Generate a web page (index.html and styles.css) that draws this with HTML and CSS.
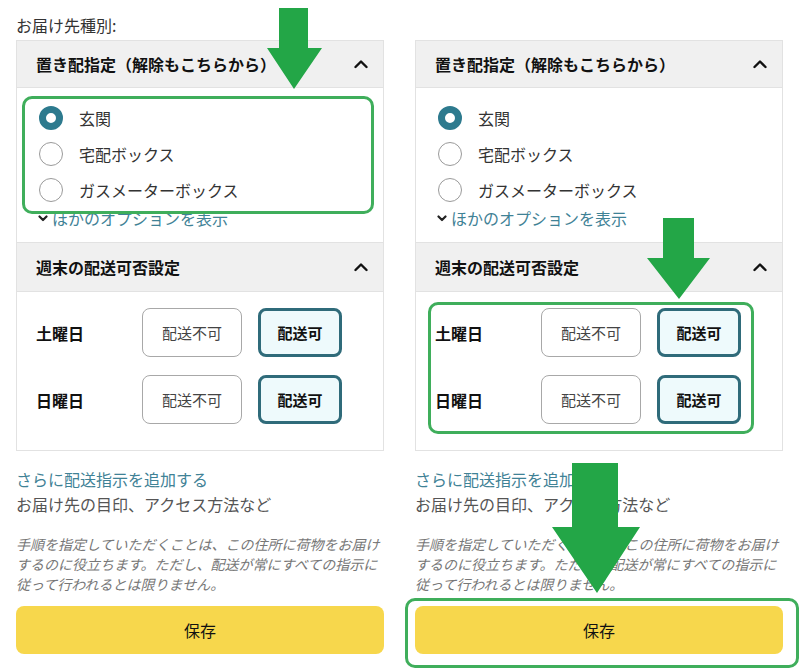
FILE: index.html
```html
<!DOCTYPE html>
<html lang="ja">
<head>
<meta charset="utf-8">
<title>置き配指定</title>
<link rel="stylesheet" href="styles.css">
</head>
<body>
<div class="page">
  <div class="col">
    <div class="field-label">お届け先種別:</div>
    <div class="panel">
      <div class="sec-head">
        <span>置き配指定（解除もこちらから）</span>
        <svg class="chev-up" width="14" height="10" viewBox="0 0 14 10"><polyline points="1.5,8 7,2.5 12.5,8" fill="none" stroke="#111" stroke-width="2.4" stroke-linecap="round" stroke-linejoin="round"/></svg>
      </div>
      <div class="radio-list">
        <div class="radio-row"><span class="radio radio-on"></span><span>玄関</span></div>
        <div class="radio-row"><span class="radio"></span><span>宅配ボックス</span></div>
        <div class="radio-row"><span class="radio"></span><span>ガスメーターボックス</span></div>
      </div>
      <div class="more-link">
        <svg class="chev-down" width="10" height="7" viewBox="0 0 10 7"><polyline points="1.5,1.5 5,5 8.5,1.5" fill="none" stroke="#222" stroke-width="2.2" stroke-linecap="round" stroke-linejoin="round"/></svg>
        <span>ほかのオプションを表示</span>
      </div>
      <div class="sec-head sec-head-top">
        <span>週末の配送可否設定</span>
        <svg class="chev-up" width="14" height="10" viewBox="0 0 14 10"><polyline points="1.5,8 7,2.5 12.5,8" fill="none" stroke="#111" stroke-width="2.4" stroke-linecap="round" stroke-linejoin="round"/></svg>
      </div>
      <div class="day-rows">
        <div class="day-row"><span class="day-label">土曜日</span><span class="opt opt-no">配送不可</span><span class="opt opt-on">配送可</span></div>
        <div class="day-row"><span class="day-label">日曜日</span><span class="opt opt-no">配送不可</span><span class="opt opt-on">配送可</span></div>
      </div>
    </div>
    <div class="add-link">さらに配送指示を追加する</div>
    <div class="sub">お届け先の目印、アクセス方法など</div>
    <p class="note">手順を指定していただくことは、この住所に荷物をお届けするのに役立ちます。ただし、配送が常にすべての指示に従って行われるとは限りません。</p>
    <div class="save">保存</div>
  </div>

  <div class="col">
    <div class="field-label"></div>
    <div class="panel">
      <div class="sec-head">
        <span>置き配指定（解除もこちらから）</span>
        <svg class="chev-up" width="14" height="10" viewBox="0 0 14 10"><polyline points="1.5,8 7,2.5 12.5,8" fill="none" stroke="#111" stroke-width="2.4" stroke-linecap="round" stroke-linejoin="round"/></svg>
      </div>
      <div class="radio-list">
        <div class="radio-row"><span class="radio radio-on"></span><span>玄関</span></div>
        <div class="radio-row"><span class="radio"></span><span>宅配ボックス</span></div>
        <div class="radio-row"><span class="radio"></span><span>ガスメーターボックス</span></div>
      </div>
      <div class="more-link">
        <svg class="chev-down" width="10" height="7" viewBox="0 0 10 7"><polyline points="1.5,1.5 5,5 8.5,1.5" fill="none" stroke="#222" stroke-width="2.2" stroke-linecap="round" stroke-linejoin="round"/></svg>
        <span>ほかのオプションを表示</span>
      </div>
      <div class="sec-head sec-head-top">
        <span>週末の配送可否設定</span>
        <svg class="chev-up" width="14" height="10" viewBox="0 0 14 10"><polyline points="1.5,8 7,2.5 12.5,8" fill="none" stroke="#111" stroke-width="2.4" stroke-linecap="round" stroke-linejoin="round"/></svg>
      </div>
      <div class="day-rows">
        <div class="day-row"><span class="day-label">土曜日</span><span class="opt opt-no">配送不可</span><span class="opt opt-on">配送可</span></div>
        <div class="day-row"><span class="day-label">日曜日</span><span class="opt opt-no">配送不可</span><span class="opt opt-on">配送可</span></div>
      </div>
    </div>
    <div class="add-link">さらに配送指示を追加する</div>
    <div class="sub">お届け先の目印、アクセス方法など</div>
    <p class="note">手順を指定していただくことは、この住所に荷物をお届けするのに役立ちます。ただし、配送が常にすべての指示に従って行われるとは限りません。</p>
    <div class="save">保存</div>
  </div>

  <div class="hl hl-radios"></div>
  <div class="hl hl-days"></div>
  <div class="hl hl-save"></div>
  <svg class="arrows" width="800" height="668" viewBox="0 0 800 668">
    <polygon points="279,8 308,8 308,48 322,48 294,89 267,48 279,48" fill="#23a647"/>
    <polygon points="663,218 694,218 694,258 710,258 679,299 647,258 663,258" fill="#23a647"/>
    <polygon points="572,463 618,463 618,527 640,527 597,593 552,527 572,527" fill="#23a647"/>
  </svg>
</div>
</body>
</html>
```

FILE: styles.css
```css
* { box-sizing: border-box; }
html, body { margin: 0; padding: 0; background: #fff; }
body {
  font-family: "Noto Sans CJK JP", "Noto Sans", sans-serif;
  color: #111;
  font-size: 16px;
}
.page {
  position: relative;
  width: 800px;
  height: 668px;
  overflow: hidden;
  display: flex;
  gap: 31px;
  padding: 15px 16px 0 16px;
}
.col {
  width: 368px;
  flex: none;
}
.field-label {
  height: 20px;
  line-height: 20px;
  font-size: 16px;
  color: #333;
  margin-bottom: 5px;
}
.panel {
  border: 1px solid #e2e2e2;
}
.sec-head {
  height: 47px;
  background: #f0f0f0;
  border-bottom: 1px solid #e2e2e2;
  display: flex;
  align-items: center;
  justify-content: space-between;
  padding: 0 15px 0 19px;
  font-weight: 700;
  font-size: 16px;
  color: #111;
}
.sec-head-top {
  height: 50px;
  border-top: 1px solid #e2e2e2;
}
.chev-up { display: block; }
.radio-list {
  padding-top: 12px;
}
.radio-row {
  height: 36px;
  display: flex;
  align-items: center;
  padding-left: 22px;
  gap: 16px;
  font-size: 16px;
  color: #333;
}
.radio {
  width: 24px;
  height: 24px;
  border-radius: 50%;
  border: 1.5px solid #9a9a9a;
  background: #fff;
  flex: none;
}
.radio-on {
  border: 7px solid #2d7a8e;
}
.more-link {
  height: 20px;
  line-height: 20px;
  display: flex;
  align-items: center;
  gap: 4px;
  padding-left: 21px;
  color: #3f8296;
  font-size: 16px;
  margin-bottom: 14px;
}
.chev-down { display: block; }
.day-rows {
  padding: 16px 0 26px 19px;
  display: flex;
  flex-direction: column;
  gap: 18px;
}
.day-row {
  display: flex;
  align-items: center;
  height: 49px;
}
.day-label {
  width: 106px;
  font-weight: 700;
  font-size: 16px;
  color: #111;
}
.opt {
  height: 49px;
  display: flex;
  align-items: center;
  justify-content: center;
  border-radius: 8px;
  font-size: 15px;
}
.opt-no {
  width: 100px;
  border: 1px solid #a8a8a8;
  color: #444;
  margin-right: 16px;
}
.opt-on {
  width: 84px;
  border: 3px solid #2f6b7a;
  background: #eefafc;
  font-weight: 700;
  color: #111;
}
.add-link {
  margin-top: 17px;
  line-height: 22px;
  color: #3f8296;
  font-size: 16px;
}
.sub {
  margin-top: 3px;
  line-height: 22px;
  color: #555;
  font-size: 16px;
}
.note {
  margin: 19px 0 0 0;
  font-size: 14px;
  line-height: 20px;
  color: #777;
  font-style: italic;
}
.save {
  margin-top: 12px;
  height: 48px;
  border-radius: 8px;
  background: #f7d74c;
  display: flex;
  align-items: center;
  justify-content: center;
  font-size: 16px;
  color: #111;
}
.hl {
  position: absolute;
  border: 3px solid #3fae5b;
  border-radius: 10px;
  pointer-events: none;
}
.hl-radios { left: 22px; top: 96px; width: 352px; height: 118px; }
.hl-days { left: 428px; top: 302px; width: 326px; height: 132px; }
.hl-save { left: 405px; top: 598px; width: 394px; height: 70px; }
.arrows {
  position: absolute;
  left: 0;
  top: 0;
  pointer-events: none;
}
```
